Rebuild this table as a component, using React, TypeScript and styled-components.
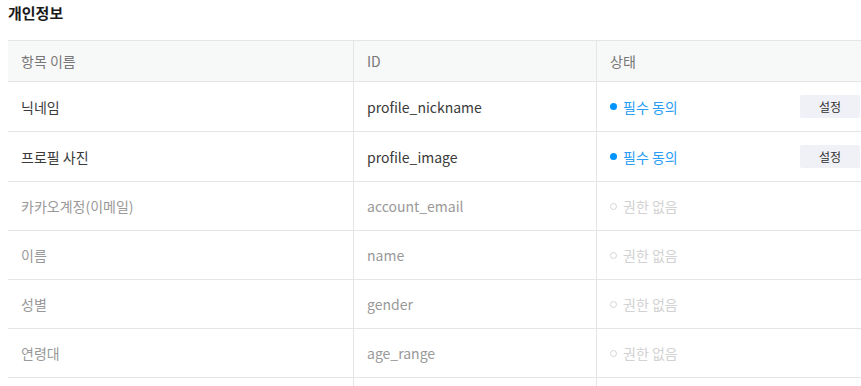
import styled, { createGlobalStyle } from "styled-components";

const GlobalStyle = createGlobalStyle`
  html, body {
    margin: 0;
    padding: 0;
    background: #fff;
    overflow: hidden;
  }
  body {
    font-family: "Noto Sans CJK KR", "Noto Sans", sans-serif;
  }
`;

const Page = styled.div`
  width: 861px;
  height: 386px;
  overflow: hidden;
  padding-left: 8px;
  box-sizing: border-box;
`;

const Title = styled.h3`
  margin: 0;
  height: 40px;
  padding-top: 3px;
  box-sizing: border-box;
  font-size: 15px;
  font-weight: 700;
  line-height: 20px;
  color: #1a1a1a;
`;

const Table = styled.table`
  width: 866px;
  border-collapse: collapse;
  table-layout: fixed;
  border-top: 1px solid #e5e5e5;
  font-size: 14px;
`;

// widths are content widths; padding adds 27px
const HeadCell = styled.th<{ $w?: number }>`
  width: ${(p) => (p.$w ? `${p.$w}px` : "auto")};
  height: 40px;
  padding: 0 14px 0 13px;
  background: #f7f8f8;
  color: #777;
  font-weight: 400;
  text-align: left;
  border-bottom: 1px solid #e5e5e5;
  & + & {
    border-left: 1px solid #e5e5e5;
  }
`;

const Cell = styled.td<{ $muted?: boolean; $tall?: boolean }>`
  height: ${(p) => (p.$tall ? "49px" : "48px")};
  padding: 0 14px 0 13px;
  color: ${(p) => (p.$muted ? "#999" : "#3a3a3a")};
  border-bottom: 1px solid #e5e5e5;
  & + & {
    border-left: 1px solid #e5e5e5;
  }
`;

const StatusWrap = styled.div`
  display: flex;
  align-items: center;
  justify-content: space-between;
`;

const Status = styled.span<{ $on: boolean }>`
  display: inline-flex;
  align-items: center;
  gap: 6px;
  color: ${(p) => (p.$on ? "#2a9df4" : "#d2d2d2")};
`;

const Dot = styled.i<{ $on: boolean }>`
  display: inline-block;
  width: 7px;
  height: 7px;
  box-sizing: border-box;
  border-radius: 50%;
  background: ${(p) => (p.$on ? "#0094ff" : "transparent")};
  border: ${(p) => (p.$on ? "none" : "1px solid #d5d5d5")};
`;

const SetButton = styled.button`
  width: 60px;
  height: 23px;
  border: none;
  border-radius: 2px;
  background: #f0f1f6;
  color: #333;
  font-family: inherit;
  font-size: 12px;
  padding: 0;
  cursor: pointer;
`;

type Row = { name: string; id: string; on: boolean };

const rows: Row[] = [
  { name: "닉네임", id: "profile_nickname", on: true },
  { name: "프로필 사진", id: "profile_image", on: true },
  { name: "카카오계정(이메일)", id: "account_email", on: false },
  { name: "이름", id: "name", on: false },
  { name: "성별", id: "gender", on: false },
  { name: "연령대", id: "age_range", on: false },
];

const App = () => (
  <Page>
    <GlobalStyle />
    <Title>개인정보</Title>
    <Table>
      <thead>
        <tr>
          <HeadCell $w={318}>항목 이름</HeadCell>
          <HeadCell $w={215}>ID</HeadCell>
          <HeadCell>상태</HeadCell>
        </tr>
      </thead>
      <tbody>
        {rows.map((r) => (
          <tr key={r.id}>
            <Cell $muted={!r.on} $tall={r.on}>
              {r.name}
            </Cell>
            <Cell $muted={!r.on} $tall={r.on}>
              {r.id}
            </Cell>
            <Cell $tall={r.on}>
              <StatusWrap>
                <Status $on={r.on}>
                  <Dot $on={r.on} />
                  {r.on ? "필수 동의" : "권한 없음"}
                </Status>
                {r.on && <SetButton>설정</SetButton>}
              </StatusWrap>
            </Cell>
          </tr>
        ))}
        {/* next row continues below the visible area */}
        <tr>
          <Cell />
          <Cell />
          <Cell />
        </tr>
      </tbody>
    </Table>
  </Page>
);

export default App;
